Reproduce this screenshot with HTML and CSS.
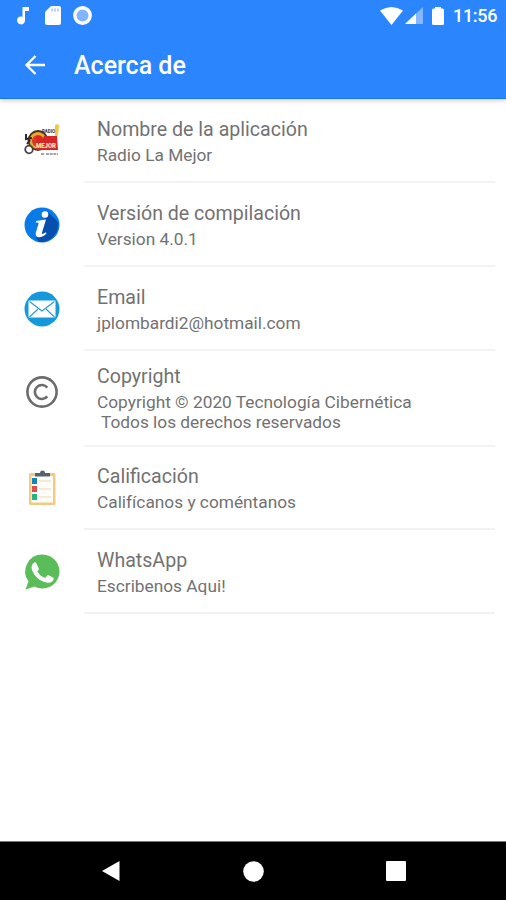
FILE: index.html
```html
<!DOCTYPE html>
<html lang="es">
<head>
<meta charset="utf-8">
<title>Acerca de</title>
<link rel="stylesheet" href="styles.css">
</head>
<body>
<div class="screen">
  <header class="header">
    <div class="status">
      <div class="notifications">
        <svg width="13" height="18" viewBox="0 0 13 18" fill="#fff"><path d="M5.500 0H12v4H8v9.500A4 4 0 1 1 5.500 9.700z"/></svg>
        <svg width="16" height="19" viewBox="0 0 16 19"><path fill="#fff" d="M6 0h8a2 2 0 0 1 2 2v15a2 2 0 0 1-2 2H2a2 2 0 0 1-2-2V6z"/><path stroke="#8fbcff" stroke-width="1.300" d="M7 2.500v3M10 2.500v3M13 2.500v3"/></svg>
        <svg width="19" height="19" viewBox="0 0 19 19"><circle cx="9.500" cy="9.500" r="7.700" fill="#82b5ff" stroke="#fff" stroke-width="3.400"/></svg>
      </div>
      <div class="system">
        <svg width="23" height="18" viewBox="0 0 23 18" fill="#fff"><path d="M0 3.500Q11.500-3.500 23 3.500L11.500 18z"/></svg>
        <svg class="signal" width="18" height="17" viewBox="0 0 18 17"><path fill="#86b8ff" d="M18 0v17H0z"/><path fill="#fff" d="M11 6.600V17H0z"/></svg>
        <svg class="battery" width="12" height="18" viewBox="0 0 12 18" fill="#fff"><path d="M3 0h6v1.500h1.500A1.500 1.500 0 0 1 12 3v13.500a1.500 1.500 0 0 1-1.500 1.500h-9A1.500 1.500 0 0 1 0 16.500V3a1.500 1.500 0 0 1 1.500-1.500H3z"/></svg>
        <span class="time">11:56</span>
      </div>
    </div>
    <div class="toolbar">
      <svg width="20" height="20" viewBox="0 0 20 20" fill="none" stroke="#fff" stroke-width="2.300"><path d="M20 10H2M10.500 1L1.500 10l9 9"/></svg>
      <h1>Acerca de</h1>
    </div>
  </header>
  <main class="list">
    <div class="row">
      <svg class="icon" viewBox="0 0 36 36"><path d="M31 2q4-2 4 1l-1 10h-3z" fill="#efc83e"/><circle cx="14" cy="17.500" r="9.500" fill="#eda72b" stroke="#44331f" stroke-width="1.800"/><circle cx="14" cy="18" r="6" fill="#d93624"/><circle cx="5" cy="26.500" r="3.800" fill="#fff" stroke="#444" stroke-width="1.800"/><path d="M2 11v5l6-1M6 17l-3 4" fill="none" stroke="#2b2b2b" stroke-width="2"/><path d="M12 13h5l1 5 2-5h13l1 14H12z" fill="#d62625"/><text class="logo-name" x="12" y="25" textLength="20" lengthAdjust="spacingAndGlyphs">MEJOR</text><text class="logo-radio" x="18" y="10" textLength="13" lengthAdjust="spacingAndGlyphs">RADIO</text><path d="M17 31h3m2 0h12" stroke="#888" stroke-width="1.500" stroke-dasharray="3 .7"/></svg>
      <div class="text"><h2>Nombre de la aplicación</h2><p>Radio La Mejor</p></div>
    </div>
    <div class="row">
      <svg class="icon" viewBox="0 0 36 36"><circle cx="18" cy="18" r="17.500" fill="#087be7"/><path d="M24 5l10 10a17.500 17.500 0 0 1-19 20l-3-4z" fill="#064fac"/><circle cx="21" cy="7.500" r="3.300" fill="#fff"/><path d="M12 14l10-1.500-3.800 12.500c-.8 2.500.5 2.500 3.300.2l1 1.300c-5 5.500-12.500 5-10.500-1.500l2.500-8c.4-1.300-.3-1.500-2.800-1.500z" fill="#fff"/></svg>
      <div class="text"><h2>Versión de compilación</h2><p>Version 4.0.1</p></div>
    </div>
    <div class="row">
      <svg class="icon" viewBox="0 0 36 36"><circle cx="18" cy="18" r="17.500" fill="#1698dc"/><rect x="4.500" y="9.500" width="27" height="17" rx="1" fill="#fff"/><path d="M5.500 10.500L18 20l12.500-9.500M5.500 26L14 18M30.500 26L22 18" fill="none" stroke="#2399d8" stroke-width="1.100"/></svg>
      <div class="text"><h2>Email</h2><p>jplombardi2@hotmail.com</p></div>
    </div>
    <div class="row tall">
      <svg class="icon" viewBox="0 0 36 36" fill="none" stroke="#6c6c6c" stroke-width="2.600"><circle cx="18" cy="18" r="14.600"/><path d="M23.300 13.600a7 7 0 1 0 0 8.800"/></svg>
      <div class="text"><h2>Copyright</h2><p>Copyright © 2020 Tecnología Cibernética
 Todos los derechos reservados</p></div>
    </div>
    <div class="row rating">
      <svg class="icon" viewBox="0 0 36 36"><rect x="5" y="3" width="26.500" height="32" rx="1.500" fill="#f2cb83"/><rect x="7.500" y="6" width="21.500" height="26.500" fill="#fffdfa"/><path d="M11 6.500V3h5a2.500 2.500 0 0 1 5 0h5v3.500z" fill="#566170"/><path fill="#1685ba" d="M8 8h5v6H8z"/><path fill="#de4f51" d="M8 16h5v6H8z"/><path fill="#24b585" d="M8 24h5v6H8z"/><path d="M15 11h12M15 19h12M15 27h12" stroke="#f5e4c4" stroke-width="1.300"/></svg>
      <div class="text"><h2>Calificación</h2><p>Califícanos y coméntanos</p></div>
    </div>
    <div class="row">
      <svg class="icon" viewBox="0 0 36 36"><path d="M18.500.5a17 17 0 1 1-8 32L1.500 35.500l3-8A17 17 0 0 1 18.500.5z" fill="#5abd5a"/><path d="M12.300 9.200l2.500 5.200c.4.800-.2 1.500-1.500 3 1.800 3 4.300 5.200 7.700 6.500l2.300-2.300c.5-.5 1-.5 1.700-.2l4 2.100c.8.400.8 1 .5 2-1 3-4.200 3.600-7 3-7.200-1.500-12.500-6.800-14.500-12.500-1-3 0-6.300 2.400-7.500.8-.4 1.500-.2 1.900.7z" fill="#fff"/></svg>
      <div class="text"><h2>WhatsApp</h2><p>Escribenos Aqui!</p></div>
    </div>
  </main>
  <nav class="navbar">
    <svg width="18" height="20" viewBox="0 0 18 20"><path d="M17.500 0v20L0 10z" fill="#fff"/></svg>
    <svg width="21" height="21" viewBox="0 0 21 21"><circle cx="10.500" cy="10.500" r="10.300" fill="#fff"/></svg>
    <svg width="20" height="20" viewBox="0 0 20 20"><rect width="20" height="20" rx="1" fill="#fff"/></svg>
  </nav>
</div>
</body>
</html>
```
FILE: styles.css
```css
* { box-sizing: border-box; }
body, h1, h2, p { margin: 0; }
body { background: #fff; font-family: Roboto, sans-serif; }
svg { display: block; flex: none; overflow: visible; }
.screen { height: 900px; display: flex; flex-direction: column; }
.header {
  height: 99px;
  flex: none;
  background: #2b86fd;
  border-bottom: 1px solid #1678ed;
  box-shadow: 0 1px 5px rgba(70, 45, 25, .3);
  color: #fff;
}
.status { height: 31px; display: flex; justify-content: space-between; padding: 0 9px 0 17px; }
.notifications, .system { display: flex; align-items: center; }
.notifications { gap: 12px; }
.notifications svg:first-child { margin-right: 3px; }
.signal { margin-left: 2px; }
.battery { margin-left: 9px; }
.time { margin-left: 9px; width: 44px; font-size: 18px; font-weight: 500; letter-spacing: -.3px; white-space: nowrap; }
.toolbar { height: 67px; display: flex; align-items: center; padding: 1px 0 0 25px; }
.toolbar h1 { margin: 2px 0 0 29px; font-size: 25px; line-height: 30px; font-weight: 500; }
.list { flex: 1; }
.row { height: 84px; display: flex; align-items: center; padding: 0 11px 0 24px; }
.tall { height: 96px; }
.rating { height: 83px; }
.icon { width: 36px; height: 36px; }
.tall .icon { margin-top: -14px; }
.rating .icon { margin-top: -2px; }
.text {
  flex: 1;
  height: 100%;
  margin-left: 24px;
  padding: 18px 0 0 13px;
  border-bottom: 2px solid #f2f2f2;
  color: #727272;
}
.tall .text { padding-top: 13px; }
.rating .text { padding-top: 17px; }
.text h2 { font-size: 19.6px; line-height: 26px; font-weight: 400; }
.text p { font-size: 17.3px; line-height: 20px; margin-top: 2px; white-space: pre; }
.logo-name { font: 900 8px Roboto, sans-serif; fill: #fff0b0; }
.logo-radio { font: 700 6px Roboto, sans-serif; fill: #333; }
.navbar {
  height: 59px;
  flex: none;
  background: #000;
  border-top: 1px solid #777;
  display: flex;
  justify-content: space-between;
  align-items: center;
  padding: 0 100px 0 102px;
}
```
